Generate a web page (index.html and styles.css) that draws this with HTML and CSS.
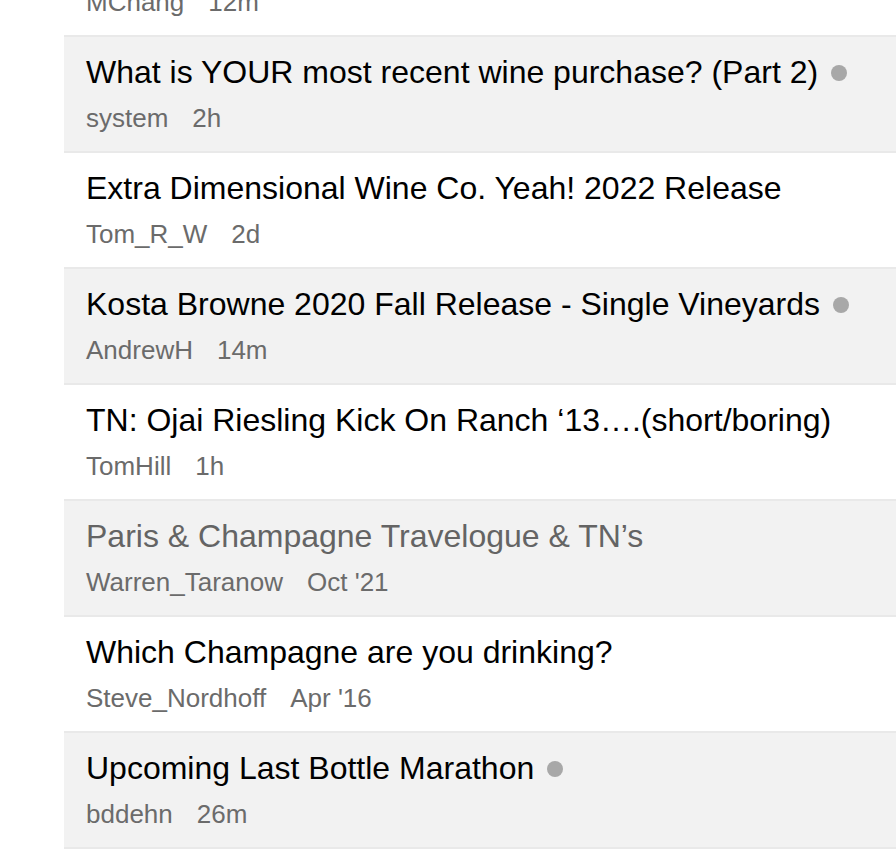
FILE: index.html
```html
<!DOCTYPE html>
<html lang="en">
<head>
    <meta charset="UTF-8">
    <meta name="viewport" content="width=device-width, initial-scale=1.0">
    <title>Latest Topics</title>
    <link rel="stylesheet" href="styles.css">
</head>
<body>
    <div class="topic-list">
        <div class="topic">
            <div class="title">Ordering wine from the cellar</div>
            <div class="meta"><span class="author">MChang</span><span class="age">12m</span></div>
        </div>
        <div class="topic alt">
            <div class="title">What is YOUR most recent wine purchase? (Part 2)<span class="dot"></span></div>
            <div class="meta"><span class="author">system</span><span class="age">2h</span></div>
        </div>
        <div class="topic">
            <div class="title">Extra Dimensional Wine Co. Yeah! 2022 Release</div>
            <div class="meta"><span class="author">Tom_R_W</span><span class="age">2d</span></div>
        </div>
        <div class="topic alt">
            <div class="title">Kosta Browne 2020 Fall Release - Single Vineyards<span class="dot"></span></div>
            <div class="meta"><span class="author">AndrewH</span><span class="age">14m</span></div>
        </div>
        <div class="topic">
            <div class="title">TN: Ojai Riesling Kick On Ranch ‘13….(short/boring)</div>
            <div class="meta"><span class="author">TomHill</span><span class="age">1h</span></div>
        </div>
        <div class="topic alt">
            <div class="title visited">Paris &amp; Champagne Travelogue &amp; TN’s</div>
            <div class="meta"><span class="author">Warren_Taranow</span><span class="age">Oct '21</span></div>
        </div>
        <div class="topic">
            <div class="title">Which Champagne are you drinking?</div>
            <div class="meta"><span class="author">Steve_Nordhoff</span><span class="age">Apr '16</span></div>
        </div>
        <div class="topic alt">
            <div class="title">Upcoming Last Bottle Marathon<span class="dot"></span></div>
            <div class="meta"><span class="author">bddehn</span><span class="age">26m</span></div>
        </div>
    </div>
</body>
</html>
```

FILE: styles.css
```css
body {
    font-family: 'Liberation Sans', Arial, Helvetica, sans-serif;
    margin: 0;
    padding: 0;
    background: #fff;
    color: #000;
    overflow: hidden;
}
.topic-list {
    margin: -79px 0 0 64px;
}
.topic {
    box-sizing: border-box;
    height: 116px;
    padding: 15px 22px 0;
    border-bottom: 2px solid #e9e9e9;
    background: #fff;
}
.topic.alt {
    background: #f2f2f2;
}
.title {
    font-size: 32px;
    line-height: 40px;
    white-space: nowrap;
}
.title.visited {
    color: #646464;
}
.dot {
    display: inline-block;
    width: 16px;
    height: 16px;
    margin-left: 13px;
    border-radius: 50%;
    background: #a8a8a8;
    vertical-align: 2px;
}
.meta {
    margin-top: 10px;
    font-size: 26px;
    line-height: 32px;
    color: #6b6b6b;
}
.meta .age {
    margin-left: 24px;
}
```
